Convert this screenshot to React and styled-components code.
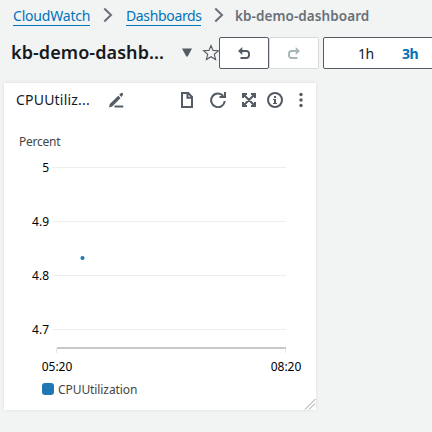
import React from "react";
import styled, { createGlobalStyle } from "styled-components";

const Global = createGlobalStyle`
  * { box-sizing: border-box; }
  body {
    margin: 0;
    background: #f2f3f3;
    font-family: "Noto Sans", "Open Sans", sans-serif;
    color: #16191f;
    overflow: hidden;
  }
`;

const Page = styled.div`
  width: 432px;
  height: 432px;
  overflow: hidden;
  background: #f2f3f3;
`;

const Breadcrumbs = styled.nav`
  display: flex;
  height: 34px;
  padding: 7px 0 0 13px;
  font-size: 14px;
  line-height: 18px;
  white-space: nowrap;
`;

const Crumb = styled.a`
  width: ${(p) => p.$width}px;
  height: 19px;
  color: #0073bb;
  border-bottom: 1px solid #0073bb;
  letter-spacing: ${(p) => p.$spacing}px;
`;

const CurrentCrumb = styled.span`
  color: #687078;
  font-weight: 600;
  font-size: 13.5px;
  letter-spacing: 0.08px;
`;

const Separator = styled.svg`
  flex: none;
  width: 10px;
  height: 16px;
  margin: 0 ${(p) => p.$after}px 0 13px;
`;

const Toolbar = styled.header`
  display: flex;
  align-items: center;
  height: 38px;
  padding-left: 11px;
`;

const Title = styled.h1`
  flex: none;
  width: 170px;
  margin: 0;
  padding-bottom: 3px;
  font-size: 18px;
  line-height: 30px;
  font-weight: 600;
  letter-spacing: 0.08px;
  white-space: nowrap;
`;

const TitleIcon = styled.svg`
  flex: none;
  width: ${(p) => p.$width}px;
  height: 18px;
  margin-right: ${(p) => p.$after || 0}px;
`;

const HistoryButton = styled.button`
  display: flex;
  flex: none;
  align-items: center;
  justify-content: center;
  width: 50px;
  height: 32px;
  padding: 0;
  border: 1px solid ${(p) => (p.disabled ? "#d5dbdb" : "#545b64")};
  border-radius: 2px;
  background: #fff;
  color: ${(p) => (p.disabled ? "#aab7b8" : "#545b64")};
`;

const RangeGroup = styled.div`
  display: flex;
  flex: none;
  align-items: center;
  gap: 29px;
  width: 130px;
  height: 32px;
  margin-left: 4px;
  padding-left: 34px;
  border: 1px solid #545b64;
  border-radius: 2px;
  background: #fff;
  font-size: 14px;
`;

const Range = styled.span`
  width: 15px;
  color: ${(p) => (p.$active ? "#0073bb" : "#16191f")};
  font-weight: ${(p) => (p.$active ? 700 : 400)};
  letter-spacing: -0.5px;
`;

const Widget = styled.section`
  position: relative;
  width: 312px;
  height: 327px;
  margin: 11px 0 0 4px;
  background: #fff;
  box-shadow: 0 0 3px rgba(0, 28, 36, 0.1);
`;

const WidgetHeader = styled.div`
  display: flex;
  align-items: center;
  height: 34px;
  padding-left: 12px;
  color: #545b64;
`;

const WidgetTitle = styled.h2`
  flex: none;
  width: 92px;
  margin: 0;
  color: #16191f;
  font-size: 14px;
  line-height: 20px;
  font-weight: 400;
  letter-spacing: 0.2px;
  white-space: nowrap;
`;

const Icon = styled.svg`
  flex: none;
  display: block;
  width: 16px;
  height: 16px;
  margin-right: ${(p) => p.$after || 0}px;
  fill: none;
  stroke: currentColor;
  stroke-width: 2;
`;

const Unit = styled.div`
  height: 20px;
  margin: 15px 0 3px 15px;
  color: #444;
  font-size: 12px;
  line-height: 20px;
  letter-spacing: -0.25px;
`;

const Plot = styled.svg`
  display: block;
  width: 312px;
  height: 224px;
`;

const PlotLabel = styled.text`
  fill: #000;
  font-size: 12px;
`;

const Legend = styled.div`
  display: flex;
  align-items: center;
  gap: 4px;
  height: 20px;
  padding-left: 38px;
  color: #444;
  font-size: 12px;
  letter-spacing: -0.08px;
`;

const Swatch = styled.span`
  width: 12px;
  height: 12px;
  border-radius: 3px;
  background: #1f77b4;
`;

const ResizeHandle = styled.svg`
  position: absolute;
  right: 0;
  bottom: 0;
  width: 12px;
  height: 12px;
`;

function Chevron({ after }) {
  return (
    <Separator $after={after} viewBox="0 0 10 16">
      <path d="M1.3 1.5 8 8l-6.7 6.5" fill="none" stroke="#687078" strokeWidth="2" />
    </Separator>
  );
}

const ticks = [
  { label: "5", y: 12.5 },
  { label: "4.9", y: 66.5 },
  { label: "4.8", y: 120.5 },
  { label: "4.7", y: 174.5 },
];

function Chart() {
  return (
    <Plot viewBox="0 0 312 224">
      {ticks.map((t) => (
        <g key={t.label}>
          <PlotLabel x="45" y={t.y + 4.5} textAnchor="end">{t.label}</PlotLabel>
          <path d={`M48 ${t.y}H282`} stroke="#eee" />
        </g>
      ))}
      <path d="M52.5 193v5M281.5 193v5" stroke="#e6e6e6" />
      <path d="M53 193H282" stroke="#c8c8c8" strokeWidth="2" />
      <circle cx="78.5" cy="103" r="2.1" fill="#1f77b4" />
      <PlotLabel x="53" y="216" textAnchor="middle">05:20</PlotLabel>
      <PlotLabel x="282" y="216" textAnchor="middle">08:20</PlotLabel>
    </Plot>
  );
}

export default function App() {
  return (
    <Page>
      <Global />
      <Breadcrumbs>
        <Crumb $width={77} $spacing={-0.2}>CloudWatch</Crumb>
        <Chevron after={13} />
        <Crumb $width={75} $spacing={-0.35}>Dashboards</Crumb>
        <Chevron after={11} />
        <CurrentCrumb>kb-demo-dashboard</CurrentCrumb>
      </Breadcrumbs>
      <Toolbar>
        <Title>kb-demo-dashb...</Title>
        <TitleIcon $width={12} $after={9} viewBox="0 0 12 18">
          <path d="M1 4.5h10L6.7 12.5H5.3z" fill="#545b64" />
        </TitleIcon>
        <TitleIcon $width={17} viewBox="0 0 17 18">
          <path d="M9 1.5 11 6.4l5.4.4-4.1 3.5 1.3 5.2L9 12.7l-4.6 2.8 1.3-5.2L1.6 6.8 7 6.4z" fill="none" stroke="#545b64" strokeWidth="1.1" />
        </TitleIcon>
        <HistoryButton aria-label="Undo">
          <Icon viewBox="0 0 16 16">
            <path d="M5 6h5.5A2.5 2.5 0 0 1 13 8.5v2a2.5 2.5 0 0 1-2.5 2.5H4.5" />
            <path d="M6.3 2v8L2 6z" fill="currentColor" stroke="none" />
          </Icon>
        </HistoryButton>
        <HistoryButton disabled aria-label="Redo">
          <Icon viewBox="0 0 16 16">
            <path d="M11 6H5.5A2.5 2.5 0 0 0 3 8.5v2A2.5 2.5 0 0 0 5.5 13h6" />
            <path d="M9.7 2v8L14 6z" fill="currentColor" stroke="none" />
          </Icon>
        </HistoryButton>
        <RangeGroup>
          <Range>1h</Range>
          <Range $active>3h</Range>
        </RangeGroup>
      </Toolbar>
      <Widget>
        <WidgetHeader>
          <WidgetTitle>CPUUtiliz...</WidgetTitle>
          <Icon $after={55} viewBox="0 0 16 16">
            <path d="m1 15.5.8-3.4L10.3 3.8l2.3 2.3-8.4 8.5zM11.2 2.8l1.9-1.9h1.8v2l-1.5 2.2z" fill="currentColor" stroke="none" />
            <path d="M6.5 14.5h8.7" />
          </Icon>
          <Icon $after={15} viewBox="0 0 16 16">
            <path d="M3 1h6.2L13 4.8V15H3zM8.5 1v4.7H13" />
          </Icon>
          <Icon $after={15} viewBox="0 0 16 16">
            <path d="M14.7 9A6.8 6.8 0 1 1 13.2 4M15 0v5H9.5" />
          </Icon>
          <Icon $after={10} viewBox="0 0 16 16">
            <path d="M2 6V2h4M10 2h4v4M14 10v4h-4M6 14H2v-4M2 2l12 12M14 2 2 14" />
            <path d="M1 1h5L1 6zM15 1v5l-5-5zM15 15h-5l5-5zM1 15v-5l5 5z" fill="currentColor" stroke="none" />
          </Icon>
          <Icon $after={10} viewBox="0 0 16 16">
            <circle cx="8" cy="8" r="7" />
            <path d="M7 4h2v2H7zM6 7h3v4h1v1H6v-1h1V8H6z" fill="currentColor" stroke="none" />
          </Icon>
          <Icon viewBox="0 0 16 16">
            <g fill="currentColor" stroke="none">
              <circle cx="8" cy="2.5" r="1.7" />
              <circle cx="8" cy="8" r="1.7" />
              <circle cx="8" cy="13.5" r="1.7" />
            </g>
          </Icon>
        </WidgetHeader>
        <Unit>Percent</Unit>
        <Chart />
        <Legend><Swatch />CPUUtilization</Legend>
        <ResizeHandle viewBox="0 0 12 12">
          <path d="M1 11.5 11.5 1M5 11.5 11 5.5" fill="none" stroke="#999" />
        </ResizeHandle>
      </Widget>
    </Page>
  );
}
